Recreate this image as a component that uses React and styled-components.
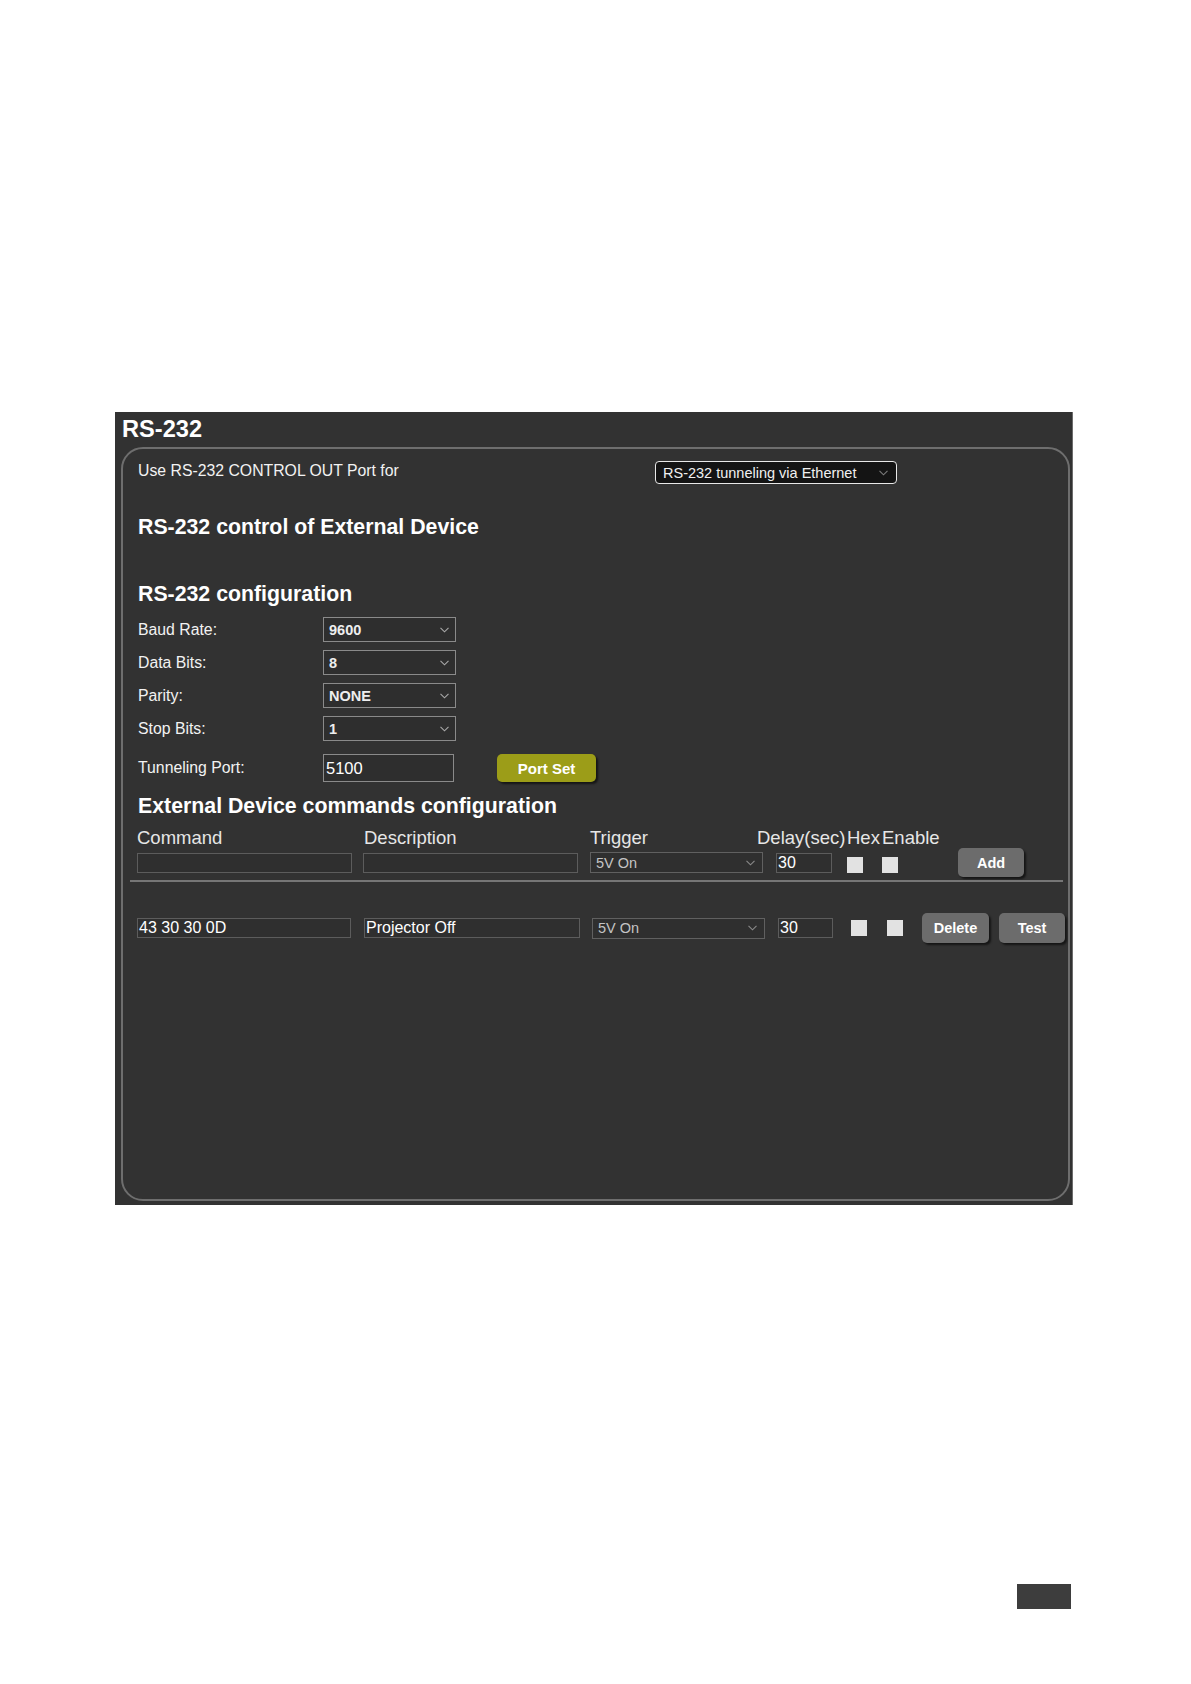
import React from "react";
import styled, { createGlobalStyle } from "styled-components";

const GlobalStyle = createGlobalStyle`
  html, body {
    margin: 0;
    padding: 0;
    background: #ffffff;
  }
  body {
    font-family: "Liberation Sans", Arial, sans-serif;
    color: #ffffff;
  }
  * { box-sizing: border-box; }
`;

const Page = styled.div`
  width: 1191px;
  min-height: 1684px;
  padding: 412px 0 0 115px;
`;

const Panel = styled.div`
  width: 958px;
  height: 793px;
  background: #323232;
  border-right: 1px solid #6c6c6c;
  padding: 3px 2px 4px 6px;
  display: flex;
  flex-direction: column;
`;

const Title = styled.div`
  font-size: 23.6px;
  line-height: 28px;
  font-weight: bold;
  padding-left: 1px;
  color: #ffffff;
`;

const Frame = styled.div`
  flex: 1;
  margin-top: 4px;
  border: 2px solid #6e6e6e;
  border-radius: 22px;
  padding: 0 0 0 15px;
  display: flex;
  flex-direction: column;
`;

const TopRow = styled.div`
  display: flex;
  align-items: flex-start;
  margin-top: 10px;
`;

const Label = styled.div`
  width: ${(p) => p.w}px;
  margin-top: ${(p) => p.mt || 0}px;
  flex: none;
  font-size: 15.8px;
  line-height: 18px;
  color: #f2f2f2;
`;

const DarkSelect = styled.div`
  margin-top: 2px;
  width: 242px;
  height: 23px;
  border: 1.5px solid #e8e8e8;
  border-radius: 4px;
  background: #141414;
  display: flex;
  align-items: center;
  justify-content: space-between;
  padding: 0 8px 0 7px;
  font-size: 14.5px;
  color: #f0f0f0;
`;

const Heading = styled.div`
  margin-top: ${(p) => p.mt}px;
  font-size: 21.3px;
  line-height: 24px;
  font-weight: bold;
  color: #ffffff;
`;

const ConfigRow = styled.div`
  display: flex;
  align-items: center;
  margin-top: ${(p) => p.mt}px;
`;

const BoxSelect = styled.div`
  width: 133px;
  height: 25px;
  border: 1.5px solid #8a8a8a;
  background: #2e2e2e;
  display: flex;
  align-items: center;
  justify-content: space-between;
  padding: 0 6px 0 5px;
  font-size: 14.5px;
  font-weight: bold;
  color: #eeeeee;
`;

const TextBox = styled.div`
  width: 131px;
  height: 28px;
  border: 1.5px solid #8a8a8a;
  background: #2e2e2e;
  display: flex;
  align-items: center;
  padding-left: 2px;
  font-size: 16.5px;
  color: #ffffff;
`;

const Button = styled.div`
  margin-left: ${(p) => p.ml || 0}px;
  width: ${(p) => p.w}px;
  height: ${(p) => p.h}px;
  flex: none;
  border-radius: 5px;
  background: ${(p) => (p.olive ? "#9c9d18" : "#6c6c6c")};
  box-shadow: 2px 2px 2px #161616;
  display: flex;
  align-items: center;
  justify-content: center;
  font-size: ${(p) => (p.olive ? 15 : 14.5)}px;
  font-weight: bold;
  color: #ffffff;
`;

const HeaderRow = styled.div`
  display: flex;
  margin-top: 9px;
  margin-left: -1px;
`;

const HeaderCell = styled.div`
  width: ${(p) => (p.w ? `${p.w}px` : "auto")};
  flex: none;
  font-size: 18.5px;
  line-height: 21px;
  color: #e6e6e6;
  white-space: nowrap;
`;

const CmdRow = styled.div`
  display: flex;
  align-items: center;
  height: ${(p) => p.h}px;
  margin-top: ${(p) => p.mt}px;
`;

const Field = styled.div`
  margin-left: ${(p) => p.ml}px;
  width: ${(p) => p.w}px;
  height: 20px;
  flex: none;
  border: 1px solid #5c5c5c;
  background: #2f2f2f;
  display: flex;
  align-items: center;
  padding-left: 1px;
  font-size: 16px;
  color: #ffffff;
  white-space: nowrap;
`;

const Trigger = styled(Field)`
  height: 21px;
  border-color: #606060;
  justify-content: space-between;
  padding: 0 7px 0 5px;
  font-size: 14.5px;
  color: #c4c4c4;
`;

const Check = styled.div`
  margin-left: ${(p) => p.ml}px;
  margin-top: ${(p) => p.mt || 0}px;
  width: 16px;
  height: 16px;
  flex: none;
  background: #e2e2e2;
`;

const Divider = styled.div`
  margin: 3px 0 0 -8px;
  width: 933px;
  height: 2px;
  background: #767676;
`;

const Footer = styled.div`
  width: 956px;
  margin-top: 379px;
  display: flex;
  justify-content: flex-end;
`;

const PageTab = styled.div`
  width: 54px;
  height: 25px;
  background: #3d3d3d;
`;

const Chevron = ({ color = "#a8a8a8" }) => (
  <svg width="9" height="6" viewBox="0 0 9 6">
    <polyline points="0.5,0.8 4.5,4.8 8.5,0.8" fill="none" stroke={color} strokeWidth="1.1" />
  </svg>
);

const config = [
  { label: "Baud Rate:", value: "9600" },
  { label: "Data Bits:", value: "8" },
  { label: "Parity:", value: "NONE" },
  { label: "Stop Bits:", value: "1" },
];

export default function App() {
  return (
    <Page>
      <GlobalStyle />
      <Panel>
        <Title>RS-232</Title>
        <Frame>
          <TopRow>
            <Label w={517} mt={3}>Use RS-232 CONTROL OUT Port for</Label>
            <DarkSelect>
              <span>RS-232 tunneling via Ethernet</span>
              <Chevron color="#7a7a7a" />
            </DarkSelect>
          </TopRow>

          <Heading mt={31}>RS-232 control of External Device</Heading>
          <Heading mt={43}>RS-232 configuration</Heading>

          {config.map((c, i) => (
            <ConfigRow key={c.label} mt={i === 0 ? 11 : 8}>
              <Label w={185}>{c.label}</Label>
              <BoxSelect>
                <span>{c.value}</span>
                <Chevron />
              </BoxSelect>
            </ConfigRow>
          ))}

          <ConfigRow mt={13}>
            <Label w={185}>Tunneling Port:</Label>
            <TextBox>5100</TextBox>
            <Button olive w={99} h={28} ml={43}>Port Set</Button>
          </ConfigRow>

          <Heading mt={12}>External Device commands configuration</Heading>

          <HeaderRow>
            <HeaderCell w={227}>Command</HeaderCell>
            <HeaderCell w={226}>Description</HeaderCell>
            <HeaderCell w={167}>Trigger</HeaderCell>
            <HeaderCell w={90}>Delay(sec)</HeaderCell>
            <HeaderCell w={35}>Hex</HeaderCell>
            <HeaderCell>Enable</HeaderCell>
          </HeaderRow>

          <CmdRow h={29} mt={0}>
            <Field ml={-1} w={215} />
            <Field ml={11} w={215} />
            <Trigger ml={12} w={173}>
              <span>5V On</span>
              <Chevron color="#8a8a8a" />
            </Trigger>
            <Field ml={13} w={56}>30</Field>
            <Check ml={15} mt={4} />
            <Check ml={19} mt={4} />
            <Button w={66} h={29} ml={60}>Add</Button>
          </CmdRow>

          <Divider />

          <CmdRow h={30} mt={31}>
            <Field ml={-1} w={214}>43 30 30 0D</Field>
            <Field ml={13} w={216}>Projector Off</Field>
            <Trigger ml={12} w={173}>
              <span>5V On</span>
              <Chevron color="#8a8a8a" />
            </Trigger>
            <Field ml={13} w={55}>30</Field>
            <Check ml={18} />
            <Check ml={20} />
            <Button w={67} h={30} ml={19}>Delete</Button>
            <Button w={66} h={30} ml={10}>Test</Button>
          </CmdRow>
        </Frame>
      </Panel>
      <Footer>
        <PageTab />
      </Footer>
    </Page>
  );
}
